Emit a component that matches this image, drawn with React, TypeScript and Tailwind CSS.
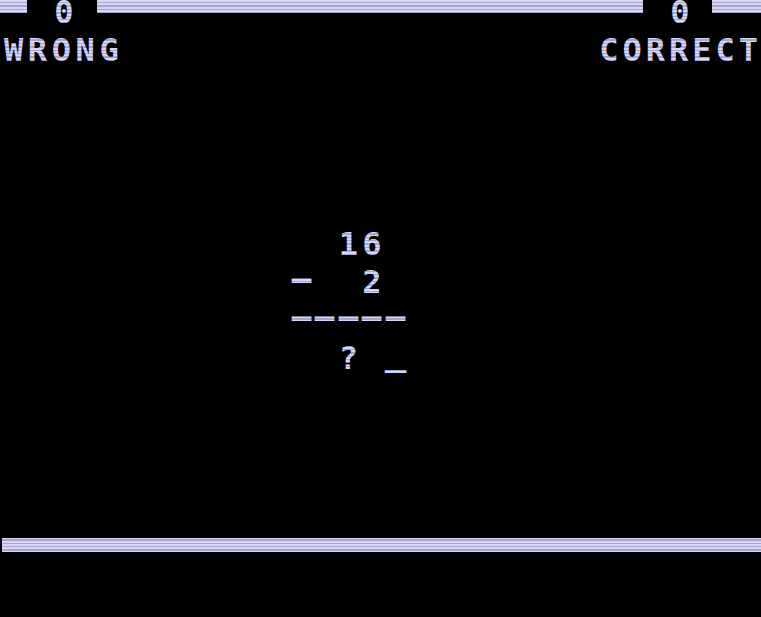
import React from "react";

const C = "bg-[#d6d6fc]";

function Cell({ children, className = "" }: { children?: React.ReactNode; className?: string }) {
  return (
    <div className="w-[23.4px] h-[38px] flex justify-center items-start">
      <span className={"inline-block " + className}>{children}</span>
    </div>
  );
}

export default function App() {
  return (
    <div className="relative w-[761px] h-[617px] bg-black overflow-hidden text-[#d6d6fc] font-['DejaVu_Sans_Mono',monospace] font-bold text-[32px] leading-none">
      <div className="flex items-start h-[34px]">
        <div className={"w-[27px] h-[13px] " + C} />
        <div className="ml-[25px] w-[24px] text-center leading-[25px] h-[25px]">0</div>
        <div className={"ml-[21px] w-[546px] h-[13px] " + C} />
        <div className="ml-[25px] w-[24px] text-center leading-[25px] h-[25px]">0</div>
        <div className={"ml-[20px] flex-1 h-[13px] " + C} />
      </div>

      <div className="flex justify-between h-[32px] pl-[4px]">
        <div className="tracking-[4.6px]">WRONG</div>
        <div className="tracking-[4px] -mr-[1px]">CORRECT</div>
      </div>

      <div className="mt-[162px] ml-[290px] flex flex-col">
        <div className="grid grid-cols-[repeat(5,23.4px)]">
          <Cell />
          <Cell />
          <Cell>1</Cell>
          <Cell>6</Cell>
          <Cell />
        </div>
        <div className="grid grid-cols-[repeat(5,23.4px)]">
          <Cell className="scale-x-[2] -translate-y-[3px]">-</Cell>
          <Cell />
          <Cell />
          <Cell>2</Cell>
          <Cell />
        </div>
        <div className="grid grid-cols-[repeat(5,23.4px)]">
          <Cell className="scale-x-[2] -translate-y-[3px]">-</Cell>
          <Cell className="scale-x-[2] -translate-y-[3px]">-</Cell>
          <Cell className="scale-x-[2] -translate-y-[3px]">-</Cell>
          <Cell className="scale-x-[2] -translate-y-[3px]">-</Cell>
          <Cell className="scale-x-[2] -translate-y-[3px]">-</Cell>
        </div>
        <div className="grid grid-cols-[repeat(5,23.4px)]">
          <Cell />
          <Cell />
          <Cell>?</Cell>
          <Cell />
          <Cell className="scale-x-[1.12] -translate-y-[4px]">_</Cell>
        </div>
      </div>

      <div className={"mt-[158px] ml-[2px] h-[14px] " + C} />

      <div className="pointer-events-none absolute inset-0 bg-[repeating-linear-gradient(to_bottom,transparent_0px,transparent_2px,rgba(0,0,0,0.22)_2px,rgba(0,0,0,0.22)_3.4px)]" />
    </div>
  );
}
